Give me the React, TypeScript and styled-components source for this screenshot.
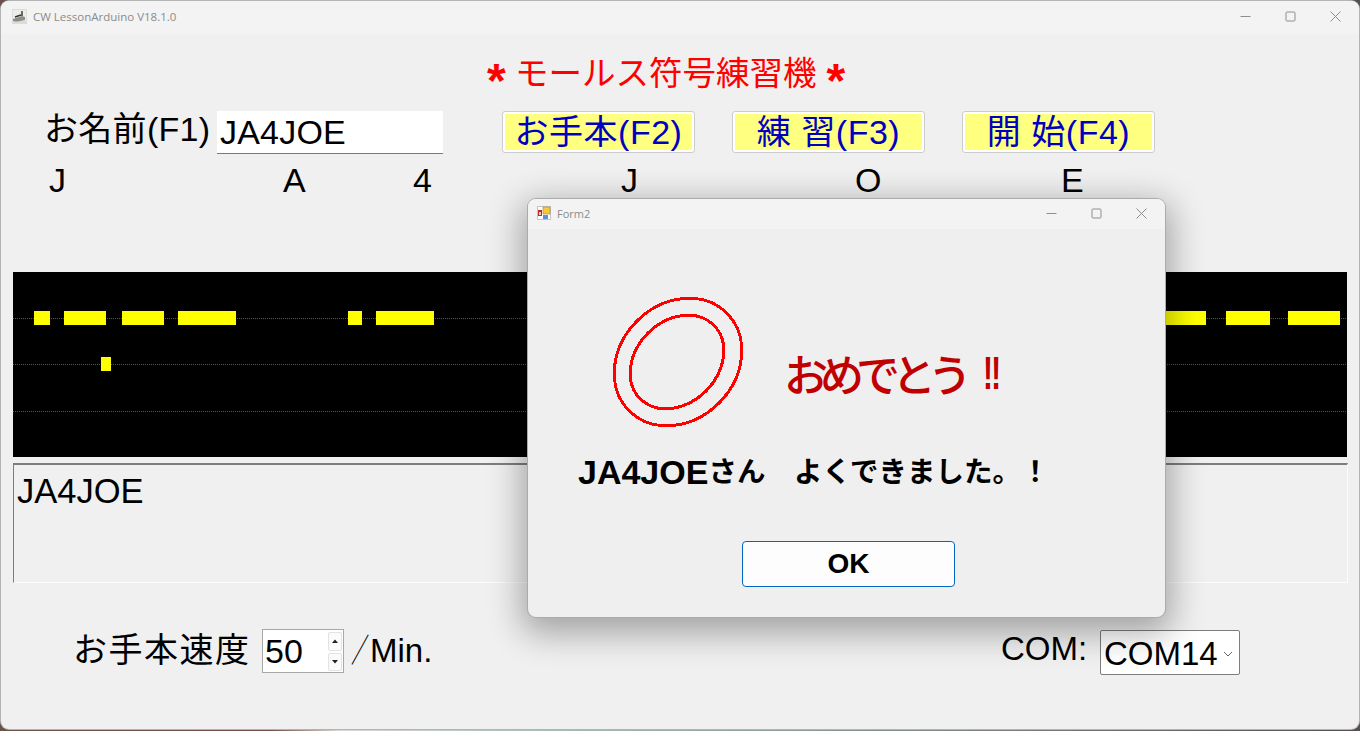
import React from 'react';
import styled, { createGlobalStyle } from 'styled-components';

const GlobalStyle = createGlobalStyle`
  html, body {
    margin: 0;
    padding: 0;
    width: 1360px;
    height: 731px;
    overflow: hidden;
    background: linear-gradient(90deg, #6a524c 0%, #76504a 20%, #d8d8d4 25%, #a8bcbc 40%, #55504f 100%);
  }
  * { box-sizing: border-box; }
`;

const FONT = `"Liberation Sans", "Noto Sans CJK JP", sans-serif`;

const Desktop = styled.div`
  position: relative;
  width: 1360px;
  height: 731px;
  padding: 1px 1px 2px 1px;
  font-family: ${FONT};
  color: #000;
`;

const Window = styled.div`
  display: flex;
  flex-direction: column;
  height: 100%;
  background: #f0f0f0;
  border-radius: 8px;
  box-shadow: 0 0 0 1px #b4b4b4;
  overflow: hidden;
`;

const TitleBar = styled.div<{ $height: number; $iconGap: number; $pad: number }>`
  display: flex;
  align-items: center;
  flex: none;
  height: ${p => p.$height}px;
  padding-left: ${p => p.$pad}px;
  padding-bottom: 2px;
  gap: ${p => p.$iconGap}px;
  background: #f3f3f3;
`;

const TitleText = styled.span<{ $size: number }>`
  flex: 1;
  font-family: "Open Sans", "Noto Sans", sans-serif;
  font-size: ${p => p.$size}px;
  color: #8b8b8b;
  white-space: nowrap;
`;

const Controls = styled.div<{ $gap: number; $pad: number }>`
  display: flex;
  align-items: center;
  gap: ${p => p.$gap}px;
  padding-right: ${p => p.$pad}px;
  color: #8e8e8e;
`;

const Client = styled.div`
  flex: 1;
  display: flex;
  flex-direction: column;
  padding: 18px 12px 0 12px;
`;

const Heading = styled.div`
  display: flex;
  align-items: center;
  height: 43px;
  padding-left: 474px;
  font-size: 33.5px;
  line-height: 43px;
  color: #ff0000;
  white-space: nowrap;
`;

const Star = styled.span`
  width: 28px;
  padding-top: 14px;
  font-size: 48px;
  font-weight: 700;
  line-height: 43px;
  &:last-child {
    width: 20px;
    margin-left: 10px;
  }
`;

const Toolbar = styled.div`
  display: flex;
  align-items: flex-start;
  height: 43px;
  margin-top: 16px;
  padding-left: 31px;
`;

const NameLabel = styled.span`
  width: 173px;
  font-size: 34px;
  letter-spacing: 0.3px;
  line-height: 37px;
  white-space: nowrap;
`;

const NameInput = styled.input`
  width: 226px;
  height: 43px;
  padding: 0 0 0 3px;
  border: 0;
  border-bottom: 1px solid #7a7a7a;
  outline: none;
  background: #fff;
  font-family: ${FONT};
  font-size: 34px;
  letter-spacing: 0.2px;
  color: #000;
`;

const Buttons = styled.div`
  display: flex;
  gap: 37px;
  margin-left: 59px;
`;

const KeyButton = styled.button`
  width: 193px;
  height: 42px;
  padding: 0;
  border: 1px solid #cccccc;
  border-radius: 3px;
  background: #ffff80;
  box-shadow: inset 0 0 0 2px #fff;
  font-family: ${FONT};
  font-size: 34px;
  letter-spacing: 0.5px;
  line-height: 38px;
  color: #0000c0;
  white-space: pre;
`;

const Letters = styled.div`
  display: grid;
  grid-template-columns: 234px 130px 208px 234px 206px 60px;
  height: 34px;
  margin-top: 9px;
  padding-left: 36px;
  font-size: 34px;
  line-height: 34px;
`;

const ChartFrame = styled.div`
  flex: none;
  width: 1334px;
  height: 185px;
  margin-top: 75px;
  background: #000;
`;

const OutputBox = styled.div`
  width: 1335px;
  height: 120px;
  margin-top: 6px;
  padding: 7px 0 0 3px;
  border-style: solid;
  border-width: 2px 1px 1px 1px;
  border-color: #7d7d7d #fbfbfb #fbfbfb #7d7d7d;
  font-size: 34.5px;
  line-height: 38px;
`;

const Footer = styled.div`
  display: flex;
  align-items: flex-start;
  height: 46px;
  margin-top: 46px;
  padding-left: 60px;
`;

const SpeedLabel = styled.span`
  width: 189px;
  font-size: 34px;
  letter-spacing: 1.5px;
  line-height: 42px;
`;

const SpinBox = styled.div`
  display: flex;
  justify-content: space-between;
  width: 82px;
  height: 44px;
  padding: 1px 1px 1px 2px;
  border: 1px solid #a8a8a8;
  background: #fff;
  font-size: 34px;
  line-height: 40px;
`;

const SpinButtons = styled.div`
  display: flex;
  flex-direction: column;
  gap: 2px;
  width: 14px;
  margin-top: 1px;
`;

const SpinButton = styled.div`
  flex: 1;
  display: flex;
  align-items: center;
  justify-content: center;
  border: 1px solid #e2e2e2;
  border-radius: 2px;
  background: #fbfbfb;
`;

const Unit = styled.span`
  display: flex;
  width: 87px;
  margin-left: 7px;
  font-size: 33px;
  line-height: 44px;
  white-space: nowrap;
`;

const Slash = styled.span`
  display: inline-block;
  width: 19px;
  transform: scaleX(0.55);
  transform-origin: left center;
`;

const ComLabel = styled.span`
  margin-left: 563px;
  width: 99px;
  font-size: 33px;
  line-height: 40px;
`;

const ComSelect = styled.div`
  display: flex;
  align-items: center;
  justify-content: space-between;
  width: 140px;
  height: 45px;
  margin-top: 1px;
  padding: 2px 6px 0 3px;
  border: 1px solid #7d7d7d;
  border-radius: 2px;
  background: #fff;
  font-size: 33px;
`;

const Dialog = styled.div`
  position: absolute;
  left: 528px;
  top: 199px;
  width: 637px;
  height: 418px;
  display: flex;
  flex-direction: column;
  border-radius: 8px;
  background: #efefef;
  box-shadow: 0 0 0 1px #ababab, 0 10px 34px 6px rgba(0, 0, 0, 0.33);
  overflow: hidden;
`;

const DialogBody = styled.div`
  flex: 1;
  display: flex;
  flex-direction: column;
  padding: 68px 0 0 50px;
`;

const Praise = styled.div`
  display: flex;
  align-items: center;
  height: 130px;
  padding-left: 35px;
`;

const PraiseText = styled.span`
  display: flex;
  align-items: center;
  margin-left: 41px;
  margin-top: 22px;
  font-size: 44px;
  font-weight: 500;
  letter-spacing: -8px;
  color: #c00000;
  white-space: pre;
`;

const Bangs = styled.span`
  display: inline-block;
  width: 18px;
  margin-left: 19px;
  font-size: 46px;
  font-weight: 700;
  letter-spacing: 0;
  transform: scaleX(0.65);
  transform-origin: left center;
`;

const Message = styled.div`
  display: flex;
  align-items: center;
  margin-top: 25px;
  height: 40px;
  font-size: 28.5px;
  font-weight: 700;
  line-height: 40px;
  white-space: pre;
`;

const Callsign = styled.span`
  font-size: 34px;
`;

const OkRow = styled.div`
  display: flex;
  margin-top: 49px;
  padding-left: 164px;
`;

const OkButton = styled.button`
  width: 213px;
  height: 46px;
  padding: 0;
  border: 1px solid #0067c0;
  border-radius: 4px;
  background: #fdfdfd;
  font-family: ${FONT};
  font-size: 28px;
  font-weight: 700;
  color: #000;
`;

const BAR_COLOR = '#ffff00';
const LINE_COLOR = '#0f8a0f';

// positions of the marks in the chart, [x, width]
const topMarks = [
  [21, 16], [51, 42], [109, 42], [165, 58], [335, 14], [363, 58],
  [1152, 41], [1213, 44], [1275, 52],
];

const MorseChart = () => (
  <svg width="1334" height="185" viewBox="0 0 1334 185" style={{ display: 'block' }}>
    {[46.5, 92.5, 139.5].map(y => (
      <line key={y} x1="0" x2="1334" y1={y} y2={y} stroke={LINE_COLOR} strokeWidth="1" strokeDasharray="1 1" />
    ))}
    {topMarks.map(([x, w]) => (
      <rect key={x} x={x} y="39" width={w} height="14" fill={BAR_COLOR} />
    ))}
    <rect x="88" y="85" width="10" height="14" fill={BAR_COLOR} />
  </svg>
);

const WinControls = ({ gap, pad }: { gap: number; pad: number }) => (
  <Controls $gap={gap} $pad={pad}>
    <svg width="11" height="11" viewBox="0 0 11 11">
      <path d="M0.5 5.5h10" stroke="currentColor" fill="none" />
    </svg>
    <svg width="11" height="11" viewBox="0 0 11 11">
      <rect x="1" y="1" width="9" height="9" rx="1" stroke="currentColor" fill="none" />
    </svg>
    <svg width="11" height="11" viewBox="0 0 11 11">
      <path d="M0.5 0.5l10 10M10.5 0.5l-10 10" stroke="currentColor" fill="none" />
    </svg>
  </Controls>
);

const KeyIcon = () => (
  <svg width="15" height="15" viewBox="0 0 15 15">
    <rect x="0.5" y="0.5" width="14" height="14" fill="#ecece8" stroke="#dcdcd8" />
    <path d="M1 10l9-3 3 1v3l-9 2-3-1z" fill="#8d8d88" />
    <path d="M3 8l6-2M10 2v5" stroke="#33332f" strokeWidth="1.4" fill="none" />
    <path d="M1 13h13" stroke="#c9c9c4" />
  </svg>
);

const FormIcon = () => (
  <svg width="14" height="14" viewBox="0 0 14 14">
    <rect x="0.5" y="0.5" width="13" height="13" fill="#fff" stroke="#c4c4c4" />
    <rect x="1" y="4" width="4" height="6" fill="#c8281c" />
    <rect x="2" y="6" width="2" height="3" fill="#f2d0c0" />
    <rect x="6" y="1" width="7" height="7" fill="#f6c93c" stroke="#a88820" strokeWidth="0.6" />
    <rect x="6" y="9" width="5" height="4" fill="#5c90dc" />
  </svg>
);

const Rings = () => (
  <svg width="130" height="130" viewBox="0 0 130 130" shapeRendering="crispEdges">
    <ellipse cx="65" cy="65" rx="69" ry="58" transform="rotate(-45 65 65)" fill="none" stroke="#ff0000" strokeWidth="3" />
    <ellipse cx="64" cy="65" rx="52" ry="41" transform="rotate(-45 64 65)" fill="none" stroke="#ff0000" strokeWidth="3" />
  </svg>
);

const Arrow = ({ up }: { up?: boolean }) => (
  <svg width="6" height="4" viewBox="0 0 6 4">
    <path d={up ? 'M3 0.5L6 4H0z' : 'M3 3.5L0 0h6z'} fill="#222" />
  </svg>
);

const App: React.FC = () => {
  return (
    <Desktop>
      <GlobalStyle />
      <Window>
        <TitleBar $height={33} $iconGap={6} $pad={11}>
          <KeyIcon />
          <TitleText $size={11.5}>CW LessonArduino V18.1.0</TitleText>
          <WinControls gap={34} pad={18} />
        </TitleBar>
        <Client>
          <Heading>
            <Star>*</Star>
            モールス符号練習機
            <Star>*</Star>
          </Heading>
          <Toolbar>
            <NameLabel>お名前(F1)</NameLabel>
            <NameInput value="JA4JOE" readOnly />
            <Buttons>
              <KeyButton>お手本(F2)</KeyButton>
              <KeyButton>練 習(F3)</KeyButton>
              <KeyButton>開 始(F4)</KeyButton>
            </Buttons>
          </Toolbar>
          <Letters>
            {['J', 'A', '4', 'J', 'O', 'E'].map((c, i) => (
              <span key={i}>{c}</span>
            ))}
          </Letters>
          <ChartFrame>
            <MorseChart />
          </ChartFrame>
          <OutputBox>JA4JOE</OutputBox>
          <Footer>
            <SpeedLabel>お手本速度</SpeedLabel>
            <SpinBox>
              50
              <SpinButtons>
                <SpinButton><Arrow up /></SpinButton>
                <SpinButton><Arrow /></SpinButton>
              </SpinButtons>
            </SpinBox>
            <Unit><Slash>／</Slash>Min.</Unit>
            <ComLabel>COM:</ComLabel>
            <ComSelect>
              COM14
              <svg width="10" height="6" viewBox="0 0 10 6">
                <path d="M1 1l4 4 4-4" stroke="#666" fill="none" />
              </svg>
            </ComSelect>
          </Footer>
        </Client>
      </Window>

      <Dialog>
        <TitleBar $height={30} $iconGap={6} $pad={9}>
          <FormIcon />
          <TitleText $size={11}>Form2</TitleText>
          <WinControls gap={34} pad={18} />
        </TitleBar>
        <DialogBody>
          <Praise>
            <Rings />
            <PraiseText>おめでとう<Bangs>‼</Bangs></PraiseText>
          </Praise>
          <Message><Callsign>JA4JOE</Callsign>さん　よくできました。！</Message>
          <OkRow>
            <OkButton>OK</OkButton>
          </OkRow>
        </DialogBody>
      </Dialog>
    </Desktop>
  );
};

export default App;
